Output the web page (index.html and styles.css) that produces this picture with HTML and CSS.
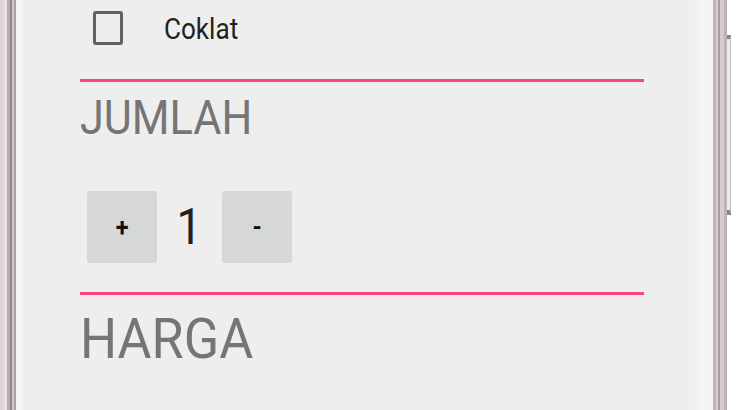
FILE: index.html
```html
<!DOCTYPE html>
<html>
<head>
<meta charset="utf-8">
<link rel="stylesheet" href="styles.css">
</head>
<body>
<div class="device">
  <div class="frame frame-left"></div>
  <div class="screen">
    <div class="content">
      <div class="check-row">
        <span class="checkbox"></span>
        <span class="check-label"><span class="sx">Coklat</span></span>
      </div>
      <div class="divider"></div>
      <div class="heading jumlah"><span class="sx">JUMLAH</span></div>
      <div class="qty-row">
        <button class="qty-btn"><span class="sx">+</span></button>
        <span class="qty-value"><span class="sx">1</span></span>
        <button class="qty-btn"><span class="sx">-</span></button>
      </div>
      <div class="divider divider-2"></div>
      <div class="heading harga"><span class="sx sx-wide">HARGA</span></div>
    </div>
  </div>
  <div class="frame frame-right"></div>
  <div class="side-button"></div>
</div>
</body>
</html>
```
FILE: styles.css
```css
html, body {
  margin: 0;
  padding: 0;
  background: #ffffff;
  overflow: hidden;
  font-family: Roboto, "Liberation Sans", sans-serif;
}

.device {
  position: relative;
  display: flex;
  width: 750px;
  height: 410px;
}

.frame-left {
  width: 16px;
  background: linear-gradient(to right,
    #ddd5d9 0, #ddd5d9 4px,
    #e9e1e5 4px, #e9e1e5 7px,
    #b6aeb2 7px, #b6aeb2 10px,
    #8f888c 10px, #8f888c 12px,
    #d2cace 12px, #d2cace 14px,
    #aaa2a6 14px, #aaa2a6 16px);
}

.screen {
  width: 697px;
  background: linear-gradient(to right,
    #f6f6f8 0, #f6f6f8 5px, #eeeeee 9px,
    #eeeeee calc(100% - 19px), #f5f5f7 calc(100% - 14px));
}

.frame-right {
  width: 14px;
  background: linear-gradient(to right,
    #bdb5b9 0, #bdb5b9 3px,
    #d8d0d4 3px, #d8d0d4 5px,
    #a69ea2 5px, #a69ea2 7px,
    #d4ccd0 7px, #d4ccd0 11px,
    #bab2b6 11px, #bab2b6 14px);
}

.side-button {
  position: absolute;
  left: 727px;
  top: 35px;
  width: 4px;
  height: 180px;
  background: #eceaeb;
  border-right: 1px solid #c4bfc1;
  border-top: 4px solid #8a8688;
  border-bottom: 5px solid #8a8688;
  box-sizing: border-box;
}

.content {
  padding-left: 64px;
  width: 564px;
}

.sx {
  display: inline-block;
  transform: scaleX(0.9);
  transform-origin: left center;
}

.sx-wide {
  transform: scaleX(0.93);
}

.check-row {
  display: flex;
  align-items: center;
  height: 34px;
  margin-top: 11px;
}

.checkbox {
  width: 30px;
  height: 34px;
  margin-left: 13px;
  box-sizing: border-box;
  border: 3px solid #616161;
  border-radius: 3px;
}

.check-label {
  margin-left: 41px;
  margin-top: 3px;
  font-size: 29px;
  line-height: 29px;
  color: #212121;
}

.divider {
  height: 3px;
  margin-top: 34px;
  background: #fb4582;
}

.divider-2 {
  margin-top: 29px;
}

.heading {
  color: #757575;
  white-space: nowrap;
}

.jumlah {
  margin-top: 12px;
  font-size: 48px;
  line-height: 48px;
}

.harga {
  margin-top: 16px;
  font-size: 56px;
  line-height: 56px;
}

.qty-row {
  display: flex;
  align-items: center;
  margin-top: 49px;
  padding-left: 7px;
}

.qty-btn {
  width: 70px;
  height: 72px;
  border: none;
  border-radius: 3px;
  background: #d6d7d7;
  color: #111111;
  font-family: Roboto, "Liberation Sans", sans-serif;
  font-size: 26px;
  font-weight: 700;
  padding: 0;
  display: flex;
  align-items: center;
  justify-content: center;
}

.qty-btn .sx {
  transform-origin: center;
}

.qty-value {
  width: 65px;
  text-align: center;
  font-size: 50px;
  line-height: 50px;
  color: #212121;
}

.qty-value .sx {
  transform-origin: center;
}
```
